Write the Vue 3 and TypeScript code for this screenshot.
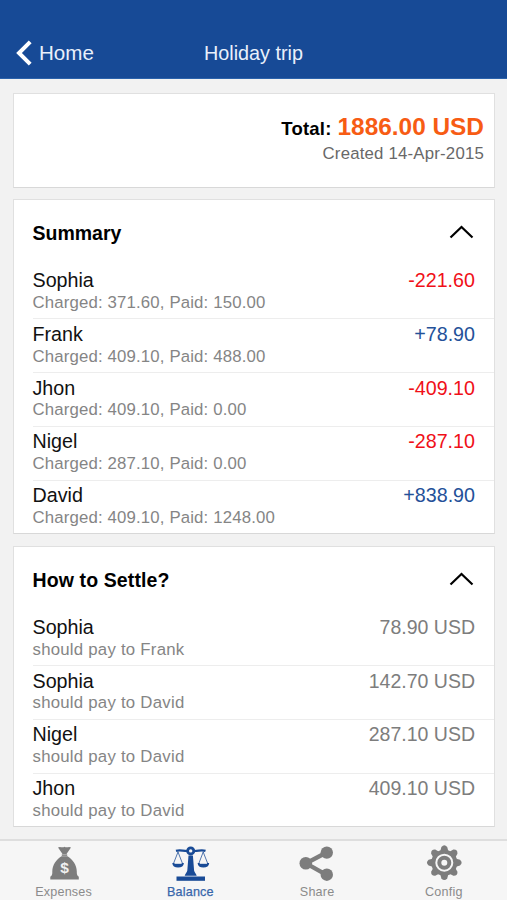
<script setup lang="ts">
import { ref } from 'vue'

interface Balance {
  name: string
  charged: string
  paid: string
  amount: string
}

interface Settlement {
  from: string
  to: string
  amount: string
}

const balances: Balance[] = [
  { name: 'Sophia', charged: '371.60', paid: '150.00', amount: '-221.60' },
  { name: 'Frank', charged: '409.10', paid: '488.00', amount: '+78.90' },
  { name: 'Jhon', charged: '409.10', paid: '0.00', amount: '-409.10' },
  { name: 'Nigel', charged: '287.10', paid: '0.00', amount: '-287.10' },
  { name: 'David', charged: '409.10', paid: '1248.00', amount: '+838.90' },
]

const settlements: Settlement[] = [
  { from: 'Sophia', to: 'Frank', amount: '78.90 USD' },
  { from: 'Sophia', to: 'David', amount: '142.70 USD' },
  { from: 'Nigel', to: 'David', amount: '287.10 USD' },
  { from: 'Jhon', to: 'David', amount: '409.10 USD' },
]

const summaryOpen = ref(true)
const settleOpen = ref(true)
const activeTab = ref('Balance')
const tabs = ['Expenses', 'Balance', 'Share', 'Config']
const teeth = [0, 45, 90, 135, 180, 225, 270, 315]
</script>

<template>
  <div class="screen">
    <header class="navbar">
      <button class="back">
        <svg class="back-icon" viewBox="0 0 17 26"><path d="M15.2 1.8 4 13l11.2 11.2" fill="none" stroke="#fff" stroke-width="4" /></svg>
        <span>Home</span>
      </button>
      <h1 class="title">Holiday trip</h1>
    </header>

    <main class="content">
      <section class="card total">
        <div class="total-line"><span class="total-label">Total:</span><span class="total-value">1886.00 USD</span></div>
        <div class="created">Created 14-Apr-2015</div>
      </section>

      <section class="card">
        <div class="card-head" @click="summaryOpen = !summaryOpen">
          <h2>Summary</h2>
          <svg class="chevron" :class="{ closed: !summaryOpen }" viewBox="0 0 26 16"><path d="M2.5 12.5 13.5 2l11 10.500" fill="none" stroke="#000" stroke-width="2.2" /></svg>
        </div>
        <ul v-if="summaryOpen" class="rows">
          <li v-for="b in balances" :key="b.name" class="row">
            <div class="person">
              <span class="name">{{ b.name }}</span>
              <span class="detail">Charged: {{ b.charged }}, Paid: {{ b.paid }}</span>
            </div>
            <span class="amount" :class="b.amount.startsWith('-') ? 'negative' : 'positive'">{{ b.amount }}</span>
          </li>
        </ul>
      </section>

      <section class="card settle">
        <div class="card-head" @click="settleOpen = !settleOpen">
          <h2>How to Settle?</h2>
          <svg class="chevron" :class="{ closed: !settleOpen }" viewBox="0 0 26 16"><path d="M2.5 12.5 13.5 2l11 10.500" fill="none" stroke="#000" stroke-width="2.2" /></svg>
        </div>
        <ul v-if="settleOpen" class="rows">
          <li v-for="(s, i) in settlements" :key="i" class="row">
            <div class="person">
              <span class="name">{{ s.from }}</span>
              <span class="detail">should pay to {{ s.to }}</span>
            </div>
            <span class="amount">{{ s.amount }}</span>
          </li>
        </ul>
      </section>
    </main>

    <nav class="tabbar">
      <button v-for="tab in tabs" :key="tab" class="tab" :class="{ active: tab === activeTab }" @click="activeTab = tab">
        <svg v-if="tab === 'Expenses'" class="tab-icon" viewBox="0 0 40 38">
          <path d="M14 2.600c2-1.600 4.200 .7 6.500-.9 2.300 1.600 4.500-.7 6.500 .9L22.500 9h-4z" fill="currentColor" />
          <path d="M17.800 10.100h5.400" stroke="currentColor" stroke-width="1.500" />
          <path d="M17.500 11.300h6c5 3 9.300 8.700 9.300 15.200 0 2.500 0 4 2 5.300v2.700H6.300v-2.700c2-1.300 2-2.800 2-5.300 0-6.500 4.200-12.200 9.200-15.200z" fill="currentColor" />
          <text x="20.500" y="28.300" class="coin" text-anchor="middle">$</text>
        </svg>
        <svg v-else-if="tab === 'Balance'" class="tab-icon" viewBox="0 0 40 38" fill="none" stroke="currentColor">
          <path d="M6 5.900c4-1.400 6.500 .1 11 .1M35.500 5.900c-4-1.400-6.500 .1-11 .1" stroke-width="2.200" />
          <circle cx="20.700" cy="5.900" r="3.100" stroke-width="2.800" />
          <path d="M8 7 3.700 18M8 7l4.300 11M33.200 7 29 18M33.200 7l4.300 11" stroke-width="1" opacity=".75" />
          <path d="M2.300 18h11.600c-.2 3-2.300 4.500-5.800 4.500S2.500 21 2.300 18zM27.600 18h11.600c-.2 3-2.300 4.500-5.800 4.500S27.800 21 27.600 18z" fill="currentColor" stroke="none" />
          <path d="M4.500 18.500h7.200M29.800 18.500h7.200" stroke="#f6f6f6" stroke-width="1.200" opacity=".8" />
          <path d="M18.500 10.500h4.400l1.200 15c.3 2 2 3 2.600 5.200H14.700c.6-2.200 2.300-3.200 2.600-5.200z" fill="currentColor" stroke="none" />
          <path d="M6.500 31.500h28.500v4.300H6.500z" fill="currentColor" stroke="none" />
        </svg>
        <svg v-else-if="tab === 'Share'" class="tab-icon" viewBox="0 0 40 38" fill="currentColor">
          <path d="M29.500 7.500 9 18.300 29.500 29.800" fill="none" stroke="currentColor" stroke-width="4.300" />
          <circle cx="29.800" cy="7.600" r="6.200" /><circle cx="8.800" cy="18.300" r="6.300" /><circle cx="29.800" cy="29.700" r="6.200" />
        </svg>
        <svg v-else class="tab-icon" viewBox="0 0 40 38">
          <g transform="translate(20.300 17.700)">
            <path v-for="angle in teeth" :key="angle" :transform="`rotate(${angle})`" d="M-4.200-11-2.900-15.700Q0-19 2.900-15.700L4.200-11z" fill="currentColor" />
            <circle r="11" fill="none" stroke="currentColor" stroke-width="4" />
            <circle r="5" fill="none" stroke="currentColor" stroke-width="4" />
          </g>
        </svg>
        <span class="tab-label">{{ tab }}</span>
      </button>
    </nav>
  </div>
</template>

<style>
body {
  background: #f2f2f2;
}
</style>

<style scoped>
* {
  box-sizing: border-box;
}

.screen {
  display: flex;
  flex-direction: column;
  height: 900px;
  overflow: hidden;
  background: #f2f2f2;
  font-family: 'Liberation Sans', Arial, sans-serif;
  color: #111;
}

button {
  margin: 0;
  padding: 0;
  border: 0;
  background: none;
  font-family: inherit;
}

.navbar {
  display: grid;
  grid-template-columns: 1fr auto 1fr;
  align-items: center;
  flex: none;
  height: 79px;
  padding: 28px 15px 0;
  border-bottom: 1px solid #2b62ab;
  background: #174a96;
  color: #e9f0fb;
}

.back {
  display: flex;
  align-items: center;
  gap: 7px;
  color: inherit;
  font-size: 20.6px;
}

.back-icon {
  width: 17px;
  height: 26px;
}

.title {
  margin: 0;
  font-size: 19.8px;
  font-weight: 400;
}

.content {
  display: flex;
  flex: 1;
  flex-direction: column;
  gap: 11px;
  padding: 14px 12px 0 12.5px;
}

.card {
  border: 1px solid #e0e0e0;
  border-bottom-color: #d8d8d8;
  background: #fff;
}

.total {
  height: 94.5px;
  padding: 19px 10px 0;
  text-align: right;
}

.total-line {
  display: flex;
  justify-content: flex-end;
  align-items: baseline;
  gap: 6px;
  height: 28px;
  line-height: 28px;
  font-weight: 700;
}

.total-label {
  font-size: 18.5px;
  letter-spacing: 0.2px;
  color: #000;
}

.total-value {
  font-size: 24.4px;
  color: #f75c14;
}

.created {
  font-size: 16.8px;
  line-height: 25px;
  letter-spacing: 0.2px;
  color: #686868;
}

.card-head {
  display: flex;
  align-items: center;
  justify-content: space-between;
  height: 65px;
  padding: 2px 20px 0 19px;
}

.settle {
  margin-top: 0.5px;
}

.settle .card-head {
  height: 64.5px;
}

h2 {
  margin: 0;
  font-size: 19.5px;
  font-weight: 700;
  color: #000;
}

.settle h2 {
  letter-spacing: 0.12px;
}

.chevron {
  width: 26px;
  height: 16px;
}

.chevron.closed {
  transform: rotate(180deg);
}

.rows {
  margin: 0 0 0 19px;
  padding: 0;
  list-style: none;
}

.row {
  display: flex;
  justify-content: space-between;
  height: 53.75px;
  padding: 3.5px 19px 0 0;
}

.row + .row {
  border-top: 1px solid #ededed;
  padding-top: 2.5px;
}

.person {
  display: flex;
  flex-direction: column;
}

.name {
  font-size: 19.7px;
  line-height: 24px;
}

.detail {
  padding-top: 0.9px;
  font-size: 16.8px;
  line-height: 20px;
  letter-spacing: 0.15px;
  color: #858585;
}

.settle .detail {
  letter-spacing: 0.24px;
}

.amount {
  font-size: 19.7px;
  line-height: 24px;
  color: #7d7d7d;
}

.negative {
  color: #f01018;
}

.positive {
  color: #245199;
}

.settle .amount {
  font-size: 19.5px;
}

.tabbar {
  display: grid;
  grid-template-columns: repeat(4, 1fr);
  flex: none;
  height: 61px;
  border-top: 2px solid #dedede;
  background: #f6f6f6;
}

.tab {
  display: flex;
  flex-direction: column;
  align-items: center;
  padding: 4px 0 0 0.5px;
  color: #7d7d7d;
}

.tab.active {
  color: #194b96;
}

.tab-icon {
  width: 40px;
  height: 38px;
}

.coin {
  font-size: 15.5px;
  font-weight: 700;
  fill: #f0f0f0;
}

.tab-label {
  padding-top: 1px;
  font-size: 12.6px;
  line-height: 16px;
  letter-spacing: 0.2px;
  color: #8b8b8b;
}

.tab.active .tab-label {
  color: #3866ab;
  -webkit-text-stroke: 0.25px #3866ab;
}
</style>
